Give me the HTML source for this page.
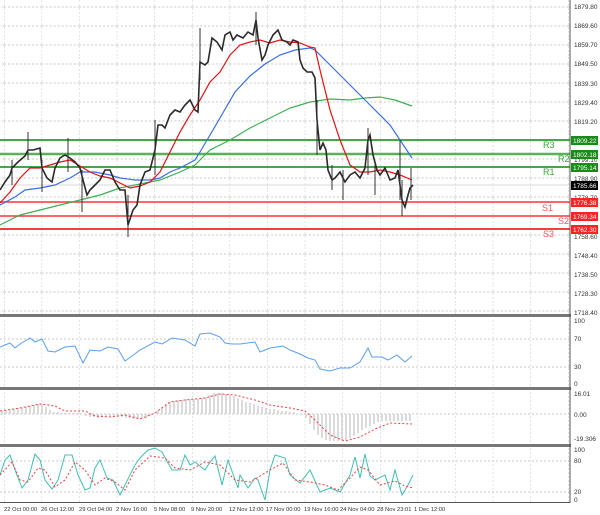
<!DOCTYPE html>
<html><head><meta charset="utf-8"><style>
body{margin:0;background:#fff;width:600px;height:515px;overflow:hidden}
svg{display:block;font-family:"Liberation Sans",sans-serif}
</style></head><body>
<svg width="600" height="515" viewBox="0 0 600 515">
<defs>
<pattern id="g" x="4" y="0" width="37.6" height="19" patternUnits="userSpaceOnUse">
<line x1="0" y1="0" x2="0" y2="19" stroke="#c8c8c8" stroke-width="1" stroke-dasharray="2,2"/>
<line x1="0" y1="7" x2="37.6" y2="7" stroke="#c8c8c8" stroke-width="1" stroke-dasharray="2,2"/>
</pattern>
<pattern id="v" x="4" y="0" width="37.6" height="600" patternUnits="userSpaceOnUse">
<line x1="0" y1="0" x2="0" y2="600" stroke="#c8c8c8" stroke-width="1" stroke-dasharray="2,2"/>
</pattern>
</defs>
<rect x="0" y="0" width="570" height="314" fill="url(#g)"/>
<rect x="0" y="318" width="570" height="68" fill="url(#v)"/>
<rect x="0" y="391" width="570" height="52" fill="url(#v)"/>
<rect x="0" y="448" width="570" height="54" fill="url(#v)"/>
<g stroke="#c8c8c8" stroke-dasharray="2,2">
<line x1="0" y1="339" x2="570" y2="339"/><line x1="0" y1="367" x2="570" y2="367"/>
<line x1="0" y1="414" x2="570" y2="414"/>
<line x1="0" y1="461" x2="570" y2="461"/><line x1="0" y1="492" x2="570" y2="492"/>
</g>
<line x1="0" y1="140" x2="570" y2="140" stroke="#0a8a0a" stroke-width="1.5"/>
<line x1="0" y1="154" x2="570" y2="154" stroke="#5cb05c" stroke-width="2.5"/>
<line x1="0" y1="167" x2="570" y2="167" stroke="#0a8a0a" stroke-width="1.5"/>
<line x1="0" y1="185" x2="570" y2="185" stroke="#d8d8d8" stroke-width="1"/>
<line x1="0" y1="202" x2="570" y2="202" stroke="#f33" stroke-width="1.5"/>
<line x1="0" y1="216" x2="570" y2="216" stroke="#f33" stroke-width="1.5"/>
<line x1="0" y1="229" x2="570" y2="229" stroke="#e00" stroke-width="1.5"/>
<g font-size="9" fill="#3a3">
<text x="543" y="148">R3</text><text x="558" y="162">R2</text><text x="543" y="175">R1</text></g>
<g font-size="9" fill="#f55">
<text x="542" y="211">S1</text><text x="558" y="224">S2</text><text x="543" y="237">S3</text></g>
<polyline fill="none" stroke="#3cb050" stroke-width="1.2" points="0,225 20,215 40,210 60,205 80,200 100,195 120,188 140,184 160,180 180,172 195,165 210,150 230,140 250,128 270,118 290,108 310,102 330,99 350,100 365,98 380,97 395,100 412,106"/>
<polyline fill="none" stroke="#3a6ee8" stroke-width="1.2" points="0,205 15,197 25,190 40,188 55,185 70,178 80,172 95,172 110,175 120,178 135,180 150,180 160,178 170,172 180,168 195,160 200,152 210,135 220,118 235,92 250,76 265,64 280,55 295,50 310,48 315,50 330,65 350,85 370,105 390,125 400,140 412,158"/>
<polyline fill="none" stroke="#e81010" stroke-width="1.2" points="0,203 10,192 20,178 30,168 40,168 50,165 60,162 70,160 80,166 90,172 100,176 110,178 120,183 130,188 140,186 150,182 160,172 170,152 180,132 190,115 200,100 210,82 220,72 230,55 240,45 250,42 260,40 270,43 280,40 290,42 300,43 310,47 315,48 320,70 330,110 340,140 350,165 360,172 370,172 380,170 390,172 400,175 412,180"/>
<polyline fill="none" stroke="#2a2a2a" stroke-width="1.6" points="0,190 5,182 10,175 12,168 18,162 25,156 28,150 33,150 40,148 42,168 47,178 52,182 55,168 60,158 65,155 70,158 75,162 80,168 83,180 87,195 90,190 95,185 100,180 105,170 110,170 115,182 120,190 125,190 128,225 133,210 137,205 140,185 145,172 150,170 155,150 158,125 162,125 165,128 170,115 175,110 180,112 185,105 190,100 195,110 198,112 200,62 205,65 208,62 210,50 212,38 217,42 222,50 225,35 230,32 233,40 237,35 243,38 248,32 253,35 256,20 258,38 262,60 265,55 268,45 273,35 278,30 282,40 287,42 290,45 293,40 298,42 300,60 303,68 307,72 312,72 315,78 317,120 320,150 323,143 326,150 328,170 332,180 335,178 340,172 345,182 350,175 355,172 360,178 365,168 368,140 370,135 373,155 377,170 380,175 385,168 390,180 395,178 398,170 402,200 405,207 408,195 410,188 413,185"/>
<g stroke="#333" stroke-width="1">
<line x1="12" y1="160" x2="12" y2="185"/><line x1="12" y1="160" x2="12" y2="185"/><line x1="28" y1="132" x2="28" y2="160"/><line x1="42" y1="160" x2="42" y2="192"/><line x1="68" y1="138" x2="68" y2="172"/><line x1="82" y1="170" x2="82" y2="212"/>
<line x1="128" y1="195" x2="128" y2="237"/><line x1="155" y1="120" x2="155" y2="175"/><line x1="200" y1="28" x2="200" y2="80"/>
<line x1="256" y1="12" x2="256" y2="45"/><line x1="317" y1="100" x2="317" y2="155"/><line x1="332" y1="165" x2="332" y2="190"/><line x1="343" y1="170" x2="343" y2="200"/><line x1="375" y1="165" x2="375" y2="195"/>
<line x1="368" y1="128" x2="368" y2="175"/><line x1="400" y1="140" x2="400" y2="200"/><line x1="402" y1="180" x2="402" y2="216"/><line x1="411" y1="168" x2="411" y2="200"/>
</g>
<polyline fill="none" stroke="#5aa0f0" stroke-width="1" points="0,347 10,343 15,348 20,344 30,338 35,342 42,339 48,351 55,352 65,347 75,346 83,363 90,350 100,351 108,347 118,349 125,361 132,356 140,350 155,342 162,344 172,338 185,340 195,346 200,334 210,333 220,337 225,343 232,344 240,344 255,342 260,352 270,348 283,346 290,350 300,354 308,358 315,360 320,369 330,371 340,368 350,368 360,362 368,348 372,357 382,357 388,360 397,355 405,362 412,356"/>
<path stroke="#cfcfcf" stroke-width="1.5" fill="none" d="M2 414V411M6 414V410M10 414V410M14 414V409M18 414V408M22 414V408M26 414V407M30 414V406M34 414V405M38 414V404M42 414V405M46 414V407M50 414V410M54 414V412M58 414V412M62 414V413M66 414V413M70 414V413M74 414V413M78 414V413M86 414V416M90 414V417M94 414V417M98 414V418M102 414V417M106 414V416M110 414V416M114 414V416M118 414V416M122 414V417M126 414V418M130 414V418M134 414V419M138 414V419M142 414V418M146 414V418M150 414V416M158 414V411M162 414V408M166 414V404M170 414V402M174 414V401M178 414V400M182 414V400M186 414V399M190 414V399M194 414V399M198 414V399M202 414V398M206 414V397M210 414V395M214 414V393M218 414V393M222 414V393M226 414V394M230 414V395M234 414V396M238 414V398M242 414V400M246 414V402M250 414V403M254 414V404M258 414V406M262 414V407M266 414V408M270 414V409M274 414V409M278 414V410M282 414V411M286 414V411M290 414V412M294 414V412M302 414V415M306 414V418M310 414V424M314 414V430M318 414V435M322 414V438M326 414V440M330 414V441M334 414V441M338 414V441M342 414V441M346 414V440M350 414V438M354 414V436M358 414V433M362 414V430M366 414V428M370 414V426M374 414V424M378 414V422M382 414V421M386 414V421M390 414V421M394 414V421M398 414V421M402 414V421M406 414V421M410 414V421"/>
<polyline fill="none" stroke="#f04040" stroke-width="1" stroke-dasharray="2,2" points="0,411 20,408 40,404 55,406 65,411 85,411 95,416 110,417 125,415 140,419 155,413 170,402 185,400 205,398 220,394 235,395 255,400 270,405 290,408 305,411 315,420 330,435 345,441 360,437 375,429 390,423 412,424"/>
<polyline fill="none" stroke="#40c0b0" stroke-width="1" points="0,475 5,460 10,455 15,470 22,488 28,480 35,454 40,460 45,480 52,489 58,480 65,455 72,455 78,475 85,490 90,488 95,468 100,460 107,478 113,480 120,495 126,483 135,465 140,458 148,450 155,448 162,452 168,463 172,470 180,470 185,455 190,465 195,462 205,470 210,462 215,456 222,485 228,460 238,488 240,475 248,488 255,478 258,480 265,500 270,470 275,455 285,458 290,475 300,483 310,470 320,492 330,488 340,492 350,475 355,457 360,478 365,454 370,476 375,480 385,475 390,490 395,470 402,495 408,485 413,475"/>
<polyline fill="none" stroke="#f04040" stroke-width="1" stroke-dasharray="2,2" points="0,475 12,462 20,480 28,482 38,468 45,470 55,487 65,480 75,462 85,470 95,485 105,478 115,482 125,490 135,470 150,456 165,458 175,468 190,470 205,462 220,465 235,480 250,482 270,470 283,463 295,480 310,482 325,485 338,490 350,478 360,467 368,470 380,485 395,481 405,486 413,488"/>
<rect x="0" y="314" width="571" height="3" fill="#777"/>
<rect x="0" y="387" width="571" height="3" fill="#777"/>
<rect x="0" y="444" width="571" height="3" fill="#777"/>
<line x1="570" y1="0" x2="570" y2="503" stroke="#555" stroke-width="1"/>
<line x1="0" y1="502.5" x2="570" y2="502.5" stroke="#555" stroke-width="1"/>
<g font-size="6.5" fill="#333">
<text x="574" y="9">1879.80</text><text x="574" y="28">1869.60</text><text x="574" y="47">1859.70</text>
<text x="574" y="66">1849.50</text><text x="574" y="86">1839.30</text><text x="574" y="105">1829.40</text>
<text x="574" y="124">1819.20</text><text x="574" y="162">1799.10</text><text x="574" y="181">1788.90</text>
<text x="574" y="200">1778.70</text><text x="574" y="239">1758.60</text><text x="574" y="258">1748.40</text>
<text x="574" y="277">1738.50</text><text x="574" y="296">1728.30</text><text x="574" y="315">1718.40</text>
<text x="574" y="323">100</text><text x="574" y="341">70</text><text x="574" y="369">30</text><text x="574" y="386">0</text>
<text x="574" y="396">16.01</text><text x="574" y="417">0.00</text><text x="574" y="441">-19.306</text>
<text x="574" y="452">100</text><text x="574" y="463">80</text><text x="574" y="494">20</text><text x="574" y="502">0</text>
</g>
<rect x="571" y="136" width="27" height="9" fill="#1a8a1a"/><text x="573" y="143" font-size="6.5" fill="#fff">1809.22</text>
<rect x="571" y="150" width="27" height="9" fill="#1a8a1a"/><text x="573" y="157" font-size="6.5" fill="#fff">1802.18</text>
<rect x="571" y="163" width="27" height="9" fill="#1a8a1a"/><text x="573" y="170" font-size="6.5" fill="#fff">1795.14</text>
<rect x="571" y="181" width="27" height="9" fill="#000"/><text x="573" y="188" font-size="6.5" fill="#fff">1785.66</text>
<rect x="571" y="198" width="27" height="9" fill="#f22"/><text x="573" y="205" font-size="6.5" fill="#fff">1776.38</text>
<rect x="571" y="212" width="27" height="9" fill="#f22"/><text x="573" y="219" font-size="6.5" fill="#fff">1769.34</text>
<rect x="571" y="225" width="27" height="9" fill="#f22"/><text x="573" y="232" font-size="6.5" fill="#fff">1762.30</text>
<g font-size="5.8" fill="#333">
<text x="4" y="511">22 Oct 00:00</text><text x="41" y="511">26 Oct 12:00</text><text x="79" y="511">29 Oct 04:00</text>
<text x="116" y="511">2 Nov 16:00</text><text x="154" y="511">5 Nov 08:00</text><text x="191" y="511">9 Nov 20:00</text>
<text x="229" y="511">12 Nov 12:00</text><text x="266" y="511">17 Nov 00:00</text><text x="304" y="511">19 Nov 16:00</text>
<text x="340" y="511">24 Nov 04:00</text><text x="377" y="511">28 Nov 23:01</text><text x="414" y="511">1 Dec 12:00</text>
</g>
</svg>
</body></html>
